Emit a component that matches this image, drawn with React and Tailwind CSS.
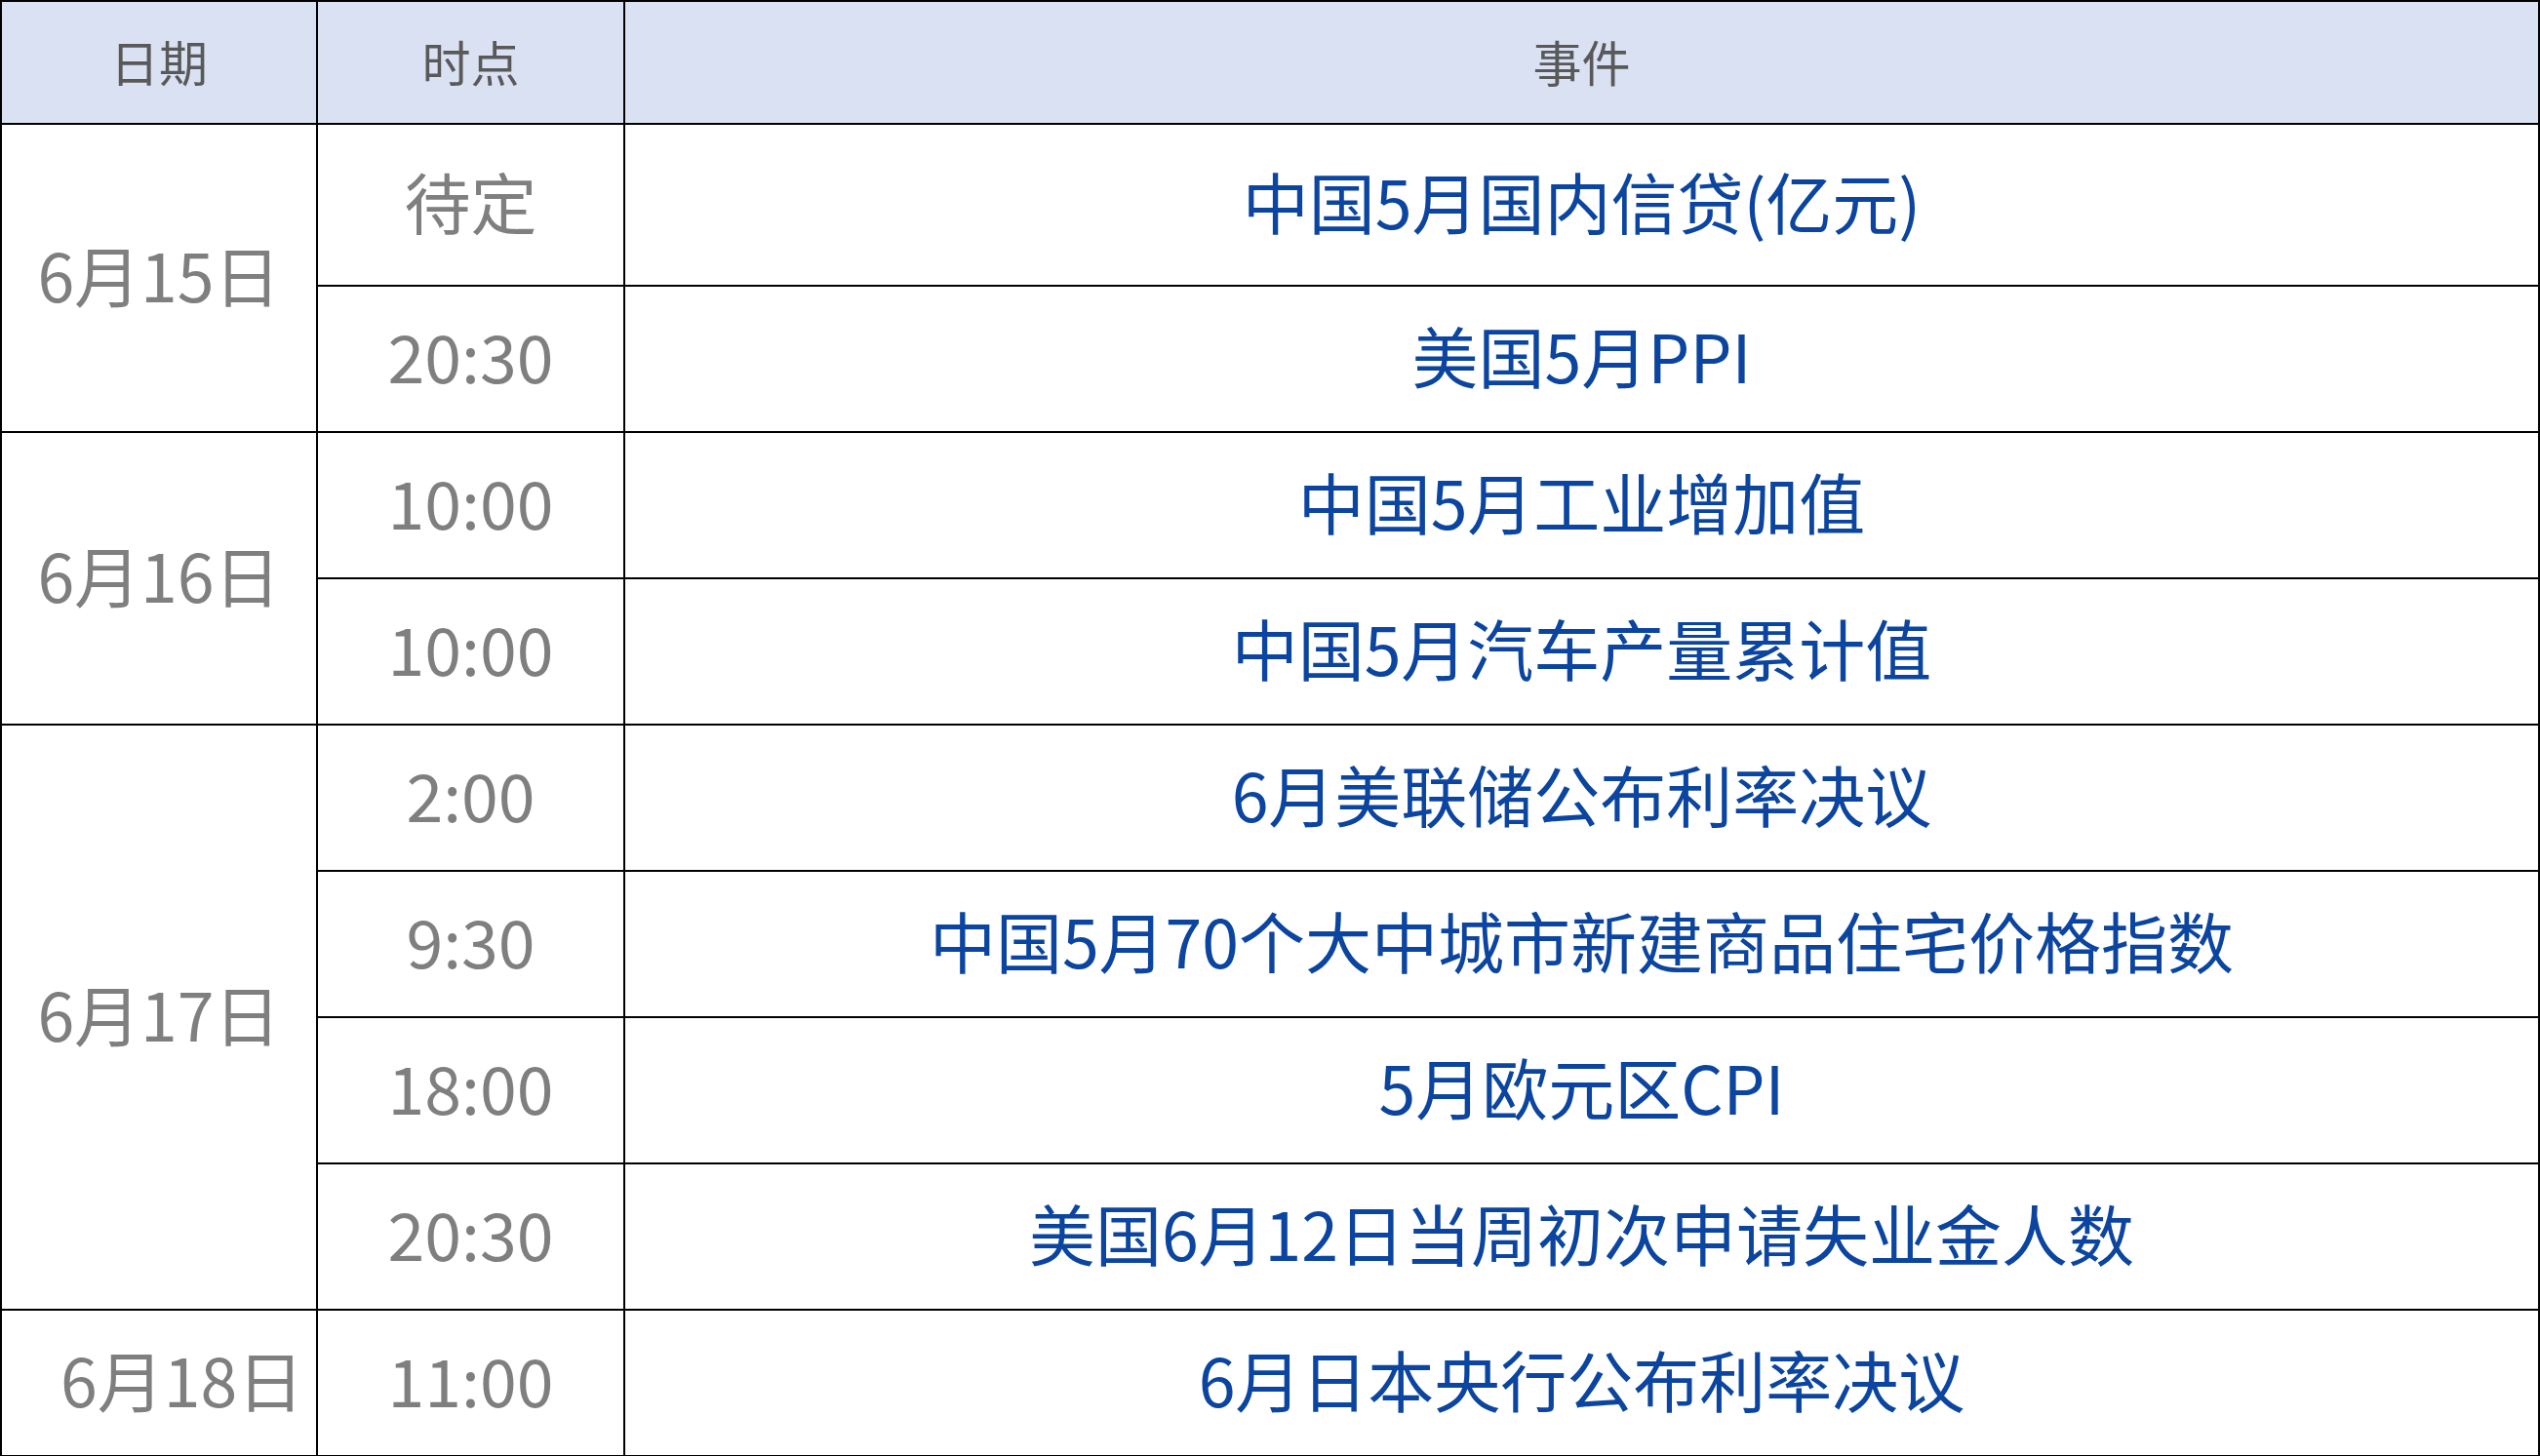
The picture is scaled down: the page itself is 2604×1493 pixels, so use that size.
import React from "react";

const font = { fontFamily: '"Noto Sans CJK SC", "Noto Sans", sans-serif' };

const rows = [
  { date: "6月15日", span: 2, time: "待定", event: "中国5月国内信贷(亿元)", first: true },
  { time: "20:30", event: "美国5月PPI" },
  { date: "6月16日", span: 2, time: "10:00", event: "中国5月工业增加值" },
  { time: "10:00", event: "中国5月汽车产量累计值" },
  { date: "6月17日", span: 4, time: "2:00", event: "6月美联储公布利率决议" },
  { time: "9:30", event: "中国5月70个大中城市新建商品住宅价格指数" },
  { time: "18:00", event: "5月欧元区CPI" },
  { time: "20:30", event: "美国6月12日当周初次申请失业金人数" },
  { date: "6月18日", span: 1, time: "11:00", event: "6月日本央行公布利率决议", shift: true },
];

export default function App() {
  return (
    <div className="w-[2604px] h-[1493px] bg-white overflow-hidden" style={font}>
      <table className="w-[2604px] border-collapse table-fixed">
        <colgroup>
          <col className="w-[324px]" />
          <col className="w-[315px]" />
          <col />
        </colgroup>
        <thead>
          <tr className="h-[126px] bg-[#dae1f3]">
            <th className="border-2 border-black text-[50px] font-normal text-[#595959] text-center align-middle pb-[4px]">日期</th>
            <th className="border-2 border-black text-[50px] font-normal text-[#595959] text-center align-middle pb-[4px]">时点</th>
            <th className="border-2 border-black text-[50px] font-normal text-[#595959] text-center align-middle pb-[4px]">事件</th>
          </tr>
        </thead>
        <tbody>
          {rows.map((r, i) => (
            <tr key={i} className={r.first ? "h-[166px]" : "h-[150px]"}>
              {r.date && (
                <td
                  rowSpan={r.span}
                  className={
                    r.shift
                      ? "border-2 border-black text-[68px] text-[#7f7f7f] align-middle text-left pl-[60px] pb-[8px] whitespace-nowrap leading-none"
                      : "border-2 border-black text-[68px] text-[#7f7f7f] align-middle text-center pb-[8px] whitespace-nowrap leading-none"
                  }
                >
                  {r.date}
                </td>
              )}
              <td className="border-2 border-black text-[68px] text-[#7f7f7f] text-center align-middle pb-[8px] whitespace-nowrap leading-none">
                {r.time}
              </td>
              <td className="border-2 border-black text-[68px] text-[#0b45a0] text-center align-middle pb-[8px] whitespace-nowrap leading-none">
                {r.event}
              </td>
            </tr>
          ))}
        </tbody>
      </table>
    </div>
  );
}
